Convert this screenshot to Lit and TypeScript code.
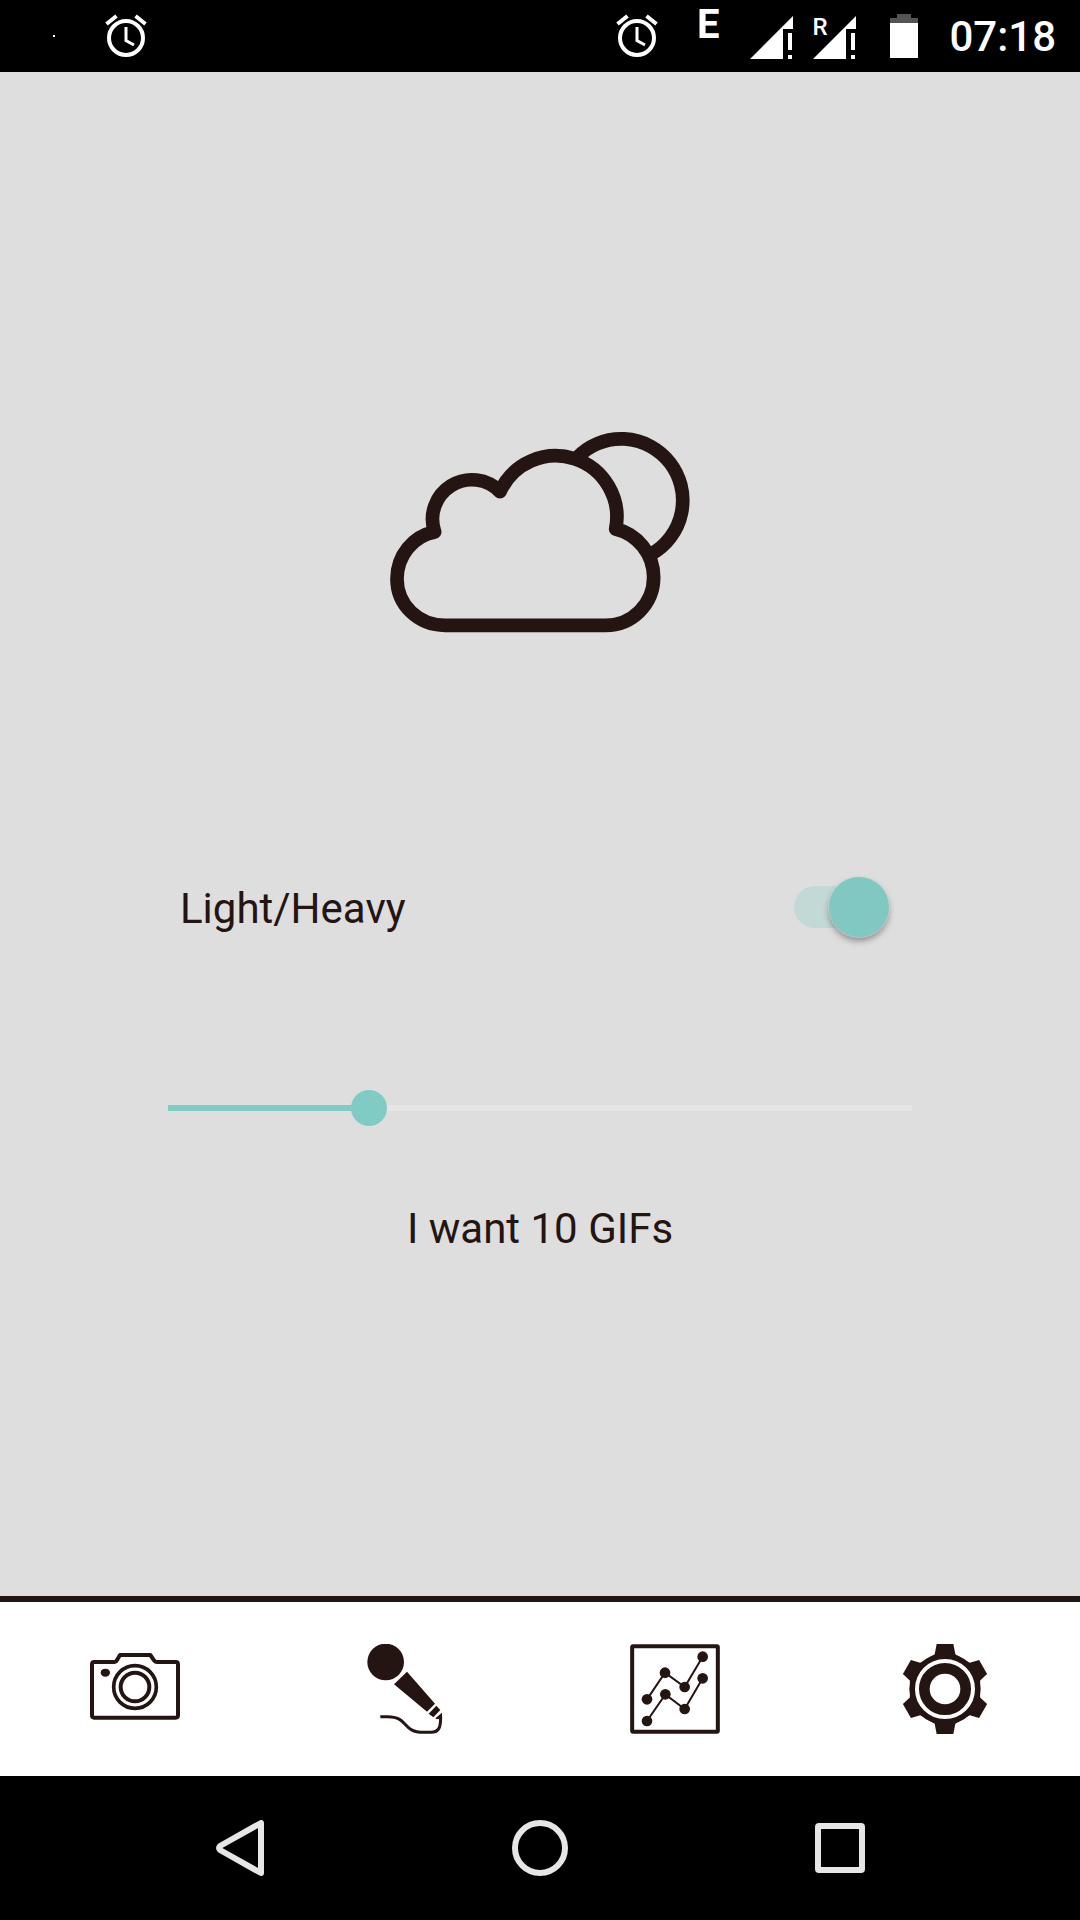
import { LitElement, html, css, svg } from "lit";
import { customElement, state } from "lit/decorators.js";

const alarmIcon = html`
  <svg class="alarm" viewBox="0 0 48 48" aria-hidden="true">
    <circle cx="24" cy="26" r="17" fill="none" stroke="#fff" stroke-width="4" />
    <path d="M24 15V28.500L32 33" fill="none" stroke="#fff" stroke-width="3" />
    <path d="M4.500 12L14.500 4M33.500 4L43.500 12" fill="none" stroke="#fff" stroke-width="4" />
  </svg>
`;

const signalIcon = html`
  <svg class="signal" viewBox="0 0 43 43" aria-hidden="true">
    <path d="M0 43H33V13H43V0Z" fill="#fff" />
    <path d="M38 17H42V34H38ZM38 39H42V43H38Z" fill="#fff" />
  </svg>
`;

@customElement("status-bar")
class StatusBar extends LitElement {
  static styles = css`
    :host {
      display: flex;
      align-items: center;
      height: 72px;
      box-sizing: border-box;
      padding: 0 24px 0 53px;
      background: #000;
      color: #fff;
      font-family: Roboto, sans-serif;
    }
    .dot {
      width: 2px;
      height: 2px;
      margin-right: 47px;
      background: #fff;
    }
    .alarm {
      width: 48px;
      height: 48px;
    }
    .right {
      display: flex;
      align-items: center;
      align-self: stretch;
      margin-left: auto;
    }
    .network {
      align-self: flex-start;
      margin: 0 31px 0 36px;
      font-size: 40px;
      line-height: 50px;
      font-weight: 700;
    }
    .signal {
      display: block;
      width: 43px;
      height: 43px;
      margin-top: 3px;
    }
    .roaming {
      position: relative;
      margin: 0 34px 0 20px;
    }
    .roaming-mark {
      position: absolute;
      left: -1px;
      top: 2px;
      font-size: 24px;
      line-height: 24px;
      font-weight: 500;
    }
    .battery {
      width: 28px;
      height: 44px;
      margin-right: 31px;
    }
    .time {
      padding-top: 2px;
      font-size: 42px;
      line-height: 50px;
      font-weight: 500;
    }
  `;

  render() {
    return html`
      <span class="dot"></span>
      ${alarmIcon}
      <div class="right">
        ${alarmIcon}
        <span class="network">E</span>
        ${signalIcon}
        <div class="roaming">
          ${signalIcon}
          <span class="roaming-mark">R</span>
        </div>
        <svg class="battery" viewBox="0 0 28 44" aria-hidden="true">
          <path d="M7 0H21V4H28V9H0V4H7Z" fill="#545454" />
          <path d="M0 9H28V44H0Z" fill="#fff" />
        </svg>
        <time class="time">07:18</time>
      </div>
    `;
  }
}

@customElement("gif-settings")
class GifSettings extends LitElement {
  static styles = css`
    :host {
      display: flex;
      flex-direction: column;
      flex: 1;
      padding: 358px 168px 0;
      background: #dedede;
      color: #241412;
      font: 400 42px/50px Roboto, sans-serif;
    }
    .weather {
      display: block;
      width: 300px;
      height: 203px;
      margin: 0 auto 244px;
    }
    .toggle-row {
      display: flex;
      align-items: center;
      justify-content: space-between;
      height: 60px;
      margin-bottom: 153px;
      padding: 0 23px 0 12px;
    }
    .toggle-label {
      padding-top: 4px;
    }
    .switch {
      appearance: none;
      display: grid;
      align-items: center;
      width: 95px;
      height: 60px;
      margin: 0;
    }
    .switch::before {
      content: "";
      grid-area: 1 / 1;
      width: 90px;
      height: 42px;
      border-radius: 21px;
      background: #c9c9c9;
    }
    .switch::after {
      content: "";
      grid-area: 1 / 1;
      width: 60px;
      height: 60px;
      border-radius: 50%;
      background: #f1f1f1;
      box-shadow: 0 0 0 1px rgba(215, 215, 215, 0.6), 0 4px 6px rgba(0, 0, 0, 0.36);
    }
    .switch:checked::before {
      background: #c3d9d6;
    }
    .switch:checked::after {
      justify-self: end;
      background: #80c8c1;
    }
    .slider {
      appearance: none;
      display: block;
      height: 36px;
      margin: 0 -18px 78px;
      background: none;
    }
    .slider::-webkit-slider-runnable-track {
      height: 36px;
      background:
        linear-gradient(#80cbc4, #80cbc4) 18px 15px / calc((100% - 36px) * var(--fill)) 6px no-repeat,
        linear-gradient(#e5e5e5, #e5e5e5) 18px 15px / calc(100% - 36px) 6px no-repeat;
    }
    .slider::-webkit-slider-thumb {
      appearance: none;
      width: 36px;
      height: 36px;
      border-radius: 50%;
      background: #80cbc4;
    }
    .count {
      text-align: center;
    }
  `;

  @state() count = 10;
  private readonly max = 37;

  private onInput(e: Event) {
    this.count = Number((e.target as HTMLInputElement).value);
  }

  render() {
    return html`
      <svg class="weather" viewBox="60 60 900 609" aria-hidden="true">
        <g fill="none" stroke="#241412" stroke-width="41" stroke-linejoin="round">
          <path d="M620 144A184.500 184.500 0 1 1 844 432" />
          <path
            d="M225 646C145 646 81 585 81 507C81 436 130 378 194 366A118 118 0 0 1 390 245A183.500 183.500 0 0 1 737 357C802 372 851 432 851 502C851 582 787 646 707 646Z"
          />
        </g>
      </svg>
      <div class="toggle-row">
        <label class="toggle-label" for="heavy">Light/Heavy</label>
        <input class="switch" id="heavy" type="checkbox" role="switch" checked />
      </div>
      <input
        class="slider"
        id="count"
        type="range"
        min="0"
        max=${this.max}
        .value=${String(this.count)}
        style="--fill: ${this.count / this.max}"
        @input=${this.onInput}
      />
      <label class="count" for="count">I want ${this.count} GIFs</label>
    `;
  }
}

const ink = "#241412";

const cameraIcon = html`
  <svg class="icon" viewBox="60 192 270 270" aria-hidden="true">
    <g fill="none" stroke=${ink} stroke-width="12" stroke-linejoin="round">
      <path d="M73 246H134Q138 246 141 240L150 225H241L252 241Q255 246 260 246H317Q324 246 324 253V406Q324 413 317 413H73Q66 413 66 406V253Q66 246 73 246Z" />
      <circle cx="195" cy="321" r="64" stroke-width="11" />
      <circle cx="195" cy="321" r="43" />
    </g>
    <ellipse cx="106" cy="278" rx="14" ry="12" fill=${ink} />
  </svg>
`;

const micIcon = html`
  <svg class="icon" viewBox="45 72 270 270" aria-hidden="true">
    <g fill=${ink}>
      <circle cx="122" cy="126" r="55" />
      <path d="M186 155L270 251L246 275L147 193Z" />
      <path d="M274 257L286 270L265 292L251 281Z" />
      <path d="M291 278V300H282V296L276 298L271 295Z" />
    </g>
    <path d="M106 290H128C192 290 170 337 235 337H258C284 337 287 318 287 290" fill="none" stroke=${ink} stroke-width="9" />
  </svg>
`;

const series = [
  [[96, 208], [150, 128], [209, 171], [263, 80]],
  [[96, 273], [151, 193], [209, 237], [263, 145]],
];

const chartIcon = html`
  <svg class="icon" viewBox="45 42 270 270" aria-hidden="true">
    <rect x="51.500" y="48.500" width="257" height="257" rx="3" fill="none" stroke=${ink} stroke-width="12" />
    ${series.map(
      (points) => svg`
        <polyline points=${points.map((p) => p.join(",")).join(" ")} fill="none" stroke=${ink} stroke-width="6" />
        ${points.map(([x, y]) => svg`<circle cx=${x} cy=${y} r="16" fill=${ink} />`)}
      `
    )}
  </svg>
`;

const gearIcon = html`
  <svg class="icon" viewBox="45 42 270 270" aria-hidden="true">
    <g fill=${ink}>
      <circle cx="180" cy="177" r="107" />
      ${[0, 180].map(
        (a) => svg`<path transform="rotate(${a} 180 177)" d="M155 42H205L211 73L228 84V110H132V84L149 73Z" />`
      )}
      ${[60, 120, 240, 300].map(
        (a) => svg`<path transform="rotate(${a} 180 177)" d="M156 45H204L211 73L228 84V110H132V84L149 73Z" />`
      )}
    </g>
    <circle cx="180" cy="177" r="84" fill="none" stroke="#fff" stroke-width="12" />
    <circle cx="180" cy="177" r="46" fill="#fff" />
  </svg>
`;

@customElement("tab-bar")
class TabBar extends LitElement {
  static styles = css`
    :host {
      display: block;
      border-top: 6px solid #241412;
      background: #fff;
    }
    .tabs {
      display: grid;
      grid-template-columns: repeat(4, 1fr);
    }
    .tab {
      display: flex;
      justify-content: center;
      padding: 42px 0;
      border: 0;
      background: none;
    }
    .icon {
      width: 90px;
      height: 90px;
    }
  `;

  render() {
    return html`
      <nav class="tabs">
        <button class="tab" aria-label="Camera">${cameraIcon}</button>
        <button class="tab" aria-label="Microphone">${micIcon}</button>
        <button class="tab" aria-label="Statistics">${chartIcon}</button>
        <button class="tab" aria-label="Settings">${gearIcon}</button>
      </nav>
    `;
  }
}

@customElement("system-nav")
class SystemNav extends LitElement {
  static styles = css`
    :host {
      display: grid;
      grid-template-columns: repeat(3, 1fr);
      padding: 0 90px;
      background: #000;
    }
    .key {
      display: flex;
      justify-content: center;
      padding: 44px 0;
      border: 0;
      background: none;
    }
    .glyph {
      width: 56px;
      height: 56px;
      fill: none;
      stroke: #e6e6e6;
      stroke-width: 6;
      stroke-linejoin: round;
    }
  `;

  render() {
    return html`
      <button class="key" aria-label="Back">
        <svg class="glyph" viewBox="0 0 56 56"><path d="M49 3V53L8 30Q6 28 8 26Z" /></svg>
      </button>
      <button class="key" aria-label="Home">
        <svg class="glyph" viewBox="0 0 56 56"><circle cx="28" cy="28" r="25" /></svg>
      </button>
      <button class="key" aria-label="Overview">
        <svg class="glyph" viewBox="0 0 56 56"><rect x="6" y="6" width="44" height="44" rx="1" /></svg>
      </button>
    `;
  }
}

@customElement("app-root")
class AppRoot extends LitElement {
  static styles = css`
    :host {
      display: flex;
      flex-direction: column;
      min-height: 100vh;
    }
  `;

  render() {
    return html`
      <status-bar></status-bar>
      <gif-settings></gif-settings>
      <tab-bar></tab-bar>
      <system-nav></system-nav>
    `;
  }
}
